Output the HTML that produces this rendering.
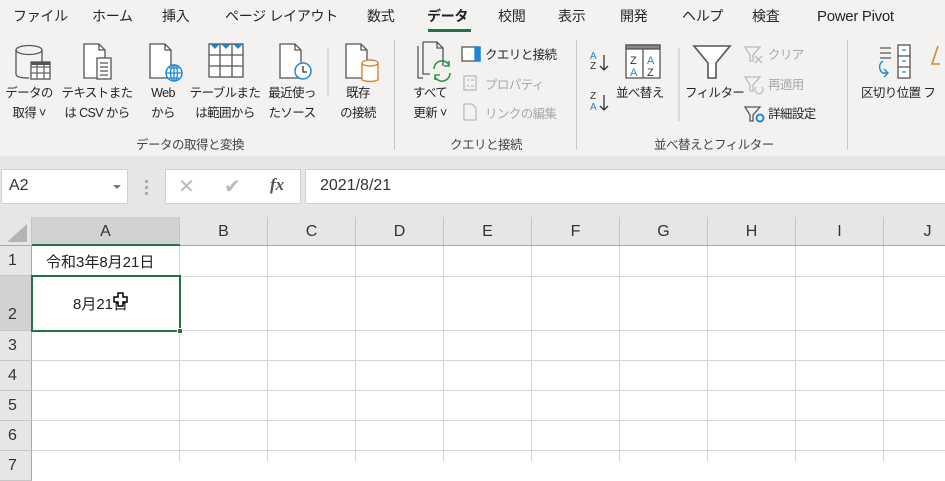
<!DOCTYPE html>
<html><head><meta charset="utf-8">
<style>
*{margin:0;padding:0;box-sizing:border-box}
body{width:945px;height:461px;overflow:hidden;background:#fff;font-family:"Liberation Sans","Noto Sans CJK JP",sans-serif;color:#262626;position:relative}
.a{position:absolute;white-space:nowrap}
.tab{font-size:14px;top:6px;line-height:20px;color:#262626;letter-spacing:-0.3px}
.lb{font-size:12.5px;color:#262626;text-align:center;line-height:20px;letter-spacing:-0.6px}
.c{width:90px;margin-left:-45px;top:83px}
.gl{font-size:12.5px;color:#444;top:136px;line-height:18px;letter-spacing:-0.5px}
.dis{color:#a8a8a8}
.sep{position:absolute;width:1px;background:#c8c8c8}
.vl{position:absolute;width:1px;background:#d4d4d4;top:246px;height:215px}
.hl{position:absolute;height:1px;background:#d4d4d4;left:32px;width:913px}
.ch{position:absolute;top:217px;height:29px;font-size:16px;color:#333;text-align:center;line-height:29px;border-right:1px solid #c6c6c6}
.rh{position:absolute;left:0;width:32px;font-size:16px;color:#333;padding-left:8px;background:#e6e6e6;border-bottom:1px solid #c6c6c6;border-right:1px solid #aaa}
</style></head><body>
<div class="a" style="left:0;top:0;width:945px;height:156px;background:#f3f2f1"></div>
<div class="a" style="left:0;top:156px;width:945px;height:61px;background:#e6e6e6"></div>

<span class="a tab" style="left:13px">ファイル</span>
<span class="a tab" style="left:92px">ホーム</span>
<span class="a tab" style="left:162px">挿入</span>
<span class="a tab" style="left:225px">ページ レイアウト</span>
<span class="a tab" style="left:367px">数式</span>
<span class="a tab" style="left:427px;font-weight:bold;color:#222">データ</span>
<div class="a" style="left:428px;top:29px;width:43px;height:3px;background:#217346"></div>
<span class="a tab" style="left:498px">校閲</span>
<span class="a tab" style="left:558px">表示</span>
<span class="a tab" style="left:620px">開発</span>
<span class="a tab" style="left:682px">ヘルプ</span>
<span class="a tab" style="left:752px">検査</span>
<span class="a tab" style="left:817px;font-size:15px;top:7px">Power Pivot</span>

<svg class="a" style="left:0;top:36px" width="945" height="90" fill="none" stroke="#555" stroke-width="1.3">
 <ellipse cx="29" cy="14" rx="13" ry="4.5"/>
 <path d="M16 14 V38 Q16 42 29 42"/>
 <path d="M42 14 V26"/>
 <rect x="31" y="26" width="19" height="17" fill="#fff"/>
 <path d="M31 31H50M31 37H50M37 26V43M44 26V43" stroke="#666"/>
 <rect x="31" y="26" width="19" height="3" fill="#555" stroke="none"/>
 <path d="M84 8H99L105 14V42H84Z" fill="#fff"/>
 <path d="M99 8V14H105"/>
 <rect x="97" y="22" width="14" height="21" fill="#fff"/>
 <path d="M100 27H108M100 31H108M100 35H108M100 39H108"/>
 <path d="M150 8H165L171 14V42H150Z" fill="#fff"/>
 <path d="M165 8V14H171"/>
 <circle cx="174" cy="37" r="8" fill="#fff" stroke="#1e88d6" stroke-width="1.5"/>
 <path d="M166 37H182M174 29V45M169 32H179M169 42H179" stroke="#1e88d6"/>
 <ellipse cx="174" cy="37" rx="3.5" ry="8" stroke="#1e88d6"/>
 <rect x="209" y="8" width="34" height="33" fill="#fff"/>
 <path d="M209 19H243M209 30H243M220 8V41M232 8V41"/>
 <path d="M212 9l3 3 3-3zM223 9l3 3 3-3zM235 9l3 3 3-3z" fill="#1e88d6" stroke="#1e88d6"/>
 <path d="M280 8H295L301 14V42H280Z" fill="#fff"/>
 <path d="M295 8V14H301"/>
 <circle cx="303" cy="35" r="8" fill="#fff" stroke="#1e88d6" stroke-width="1.5"/>
 <path d="M303 30V36H307" stroke="#333"/>
 <line x1="328" y1="12" x2="328" y2="60" stroke="#ccc"/>
 <path d="M346 8H361L367 14V42H346Z" fill="#fff"/>
 <path d="M361 8V14H367"/>
 <path d="M362 27V44Q370 47 378 44V27" fill="#fff" stroke="#d08a30" stroke-width="1.4"/>
 <ellipse cx="370" cy="27" rx="8" ry="3" fill="#fff" stroke="#d08a30" stroke-width="1.4"/>
 <path d="M418 10V42H423"/>
 <path d="M423 6H437L443 12V30"/><path d="M437 6V12H443"/>
 <path d="M423 6V38H430"/>
 <path d="M434 33a8 8 0 0 1 15-4M450 37a8 8 0 0 1-15 4" stroke="#2a9a48" stroke-width="1.6"/>
 <path d="M449 25v5h-5M435 44v-5h5" stroke="#2a9a48" stroke-width="1.6"/>
 <rect x="462" y="11" width="18" height="14" fill="#fff"/>
 <rect x="475" y="11" width="5" height="14" fill="#1e88d6" stroke="#1e88d6"/>
 <rect x="464" y="40" width="12" height="14" stroke="#bbb"/>
 <path d="M467 44h2M467 50h2M471 44h3M471 50h3" stroke="#bbb"/>
 <path d="M464 68V84h12V72l-4-4z" stroke="#bbb"/>
 <text x="590" y="23" font-size="10" fill="#1e88d6" stroke="none" font-family="Liberation Sans">A</text>
 <text x="590" y="33" font-size="10" fill="#333" stroke="none" font-family="Liberation Sans">Z</text>
 <path d="M604 19V34M600 30l4 4 4-4" stroke="#333"/>
 <text x="590" y="63" font-size="10" fill="#333" stroke="none" font-family="Liberation Sans">Z</text>
 <text x="590" y="74" font-size="10" fill="#1e88d6" stroke="none" font-family="Liberation Sans">A</text>
 <path d="M604 59V74M600 70l4 4 4-4" stroke="#333"/>
 <rect x="626" y="9" width="34" height="33" fill="#fff"/>
 <rect x="626" y="9" width="34" height="4" fill="#888" stroke="#555"/>
 <line x1="643" y1="13" x2="643" y2="42"/>
 <text x="630" y="28" font-size="11" fill="#333" stroke="none" font-family="Liberation Sans">Z</text>
 <text x="630" y="40" font-size="11" fill="#1e88d6" stroke="none" font-family="Liberation Sans">A</text>
 <text x="647" y="28" font-size="11" fill="#1e88d6" stroke="none" font-family="Liberation Sans">A</text>
 <text x="647" y="40" font-size="11" fill="#333" stroke="none" font-family="Liberation Sans">Z</text>
 <line x1="679" y1="12" x2="679" y2="85" stroke="#ccc"/>
 <path d="M694 10H730L716 27V42H708V27Z" fill="#fff" stroke-width="1.6"/>
 <path d="M745 11H760L753 19V25H750V19Z" stroke="#bbb"/>
 <path d="M755 20l7 7M762 20l-7 7" stroke="#bbb"/>
 <path d="M745 41H760L753 49V55H750V49Z" stroke="#bbb"/>
 <path d="M756 51a4 4 0 1 0 6 0" stroke="#bbb"/>
 <path d="M745 71H760L753 79V85H750V79Z"/>
 <circle cx="760" cy="82" r="3.5" stroke="#1e88d6" stroke-width="2"/>
 <path d="M880 12H891M880 17H891M880 22H891"/>
 <path d="M883 25a7 7 0 0 0 0 12h5M884 33l4 4-4 4" stroke="#1e88d6" stroke-width="1.4"/>
 <rect x="898" y="9" width="12" height="33" fill="#fff"/>
 <path d="M898 20H910M898 31H910"/>
 <path d="M902 14H906M902 25H906M902 36H906" stroke="#1e88d6"/>
 <path d="M938 10l-6 18h8" stroke="#d08a30" stroke-width="1.6"/>
</svg>

<div class="a lb c" style="left:29px">データの<br>取得 ˅</div>
<div class="a lb c" style="left:97px">テキストまた<br>は CSV から</div>
<div class="a lb c" style="left:163px">Web<br>から</div>
<div class="a lb c" style="left:225px">テーブルまた<br>は範囲から</div>
<div class="a lb c" style="left:292px">最近使っ<br>たソース</div>
<div class="a lb c" style="left:358px">既存<br>の接続</div>
<div class="a lb c" style="left:430px">すべて<br>更新 ˅</div>
<span class="a lb" style="left:485px;top:45px">クエリと接続</span>
<span class="a lb dis" style="left:485px;top:75px">プロパティ</span>
<span class="a lb dis" style="left:485px;top:104px">リンクの編集</span>
<span class="a lb" style="left:616px;top:83px">並べ替え</span>
<span class="a lb" style="left:685px;top:83px">フィルター</span>
<span class="a lb dis" style="left:768px;top:45px">クリア</span>
<span class="a lb dis" style="left:768px;top:75px">再適用</span>
<span class="a lb" style="left:768px;top:104px">詳細設定</span>
<span class="a lb" style="left:861px;top:83px">区切り位置 フ</span>
<span class="a gl" style="left:136px">データの取得と変換</span>
<span class="a gl" style="left:450px">クエリと接続</span>
<span class="a gl" style="left:654px">並べ替えとフィルター</span>
<div class="sep" style="left:394px;top:40px;height:110px"></div>
<div class="sep" style="left:576px;top:40px;height:110px"></div>
<div class="sep" style="left:847px;top:40px;height:110px"></div>

<div class="a" style="left:1px;top:169px;width:127px;height:35px;background:#fff;border:1px solid #d0d0d0"></div>
<span class="a" style="left:9px;top:177px;font-size:16px;color:#333">A2</span>
<div class="a" style="left:113px;top:185px;border-left:4px solid transparent;border-right:4px solid transparent;border-top:4px solid #777"></div>
<div class="a" style="left:145px;top:180px;width:3px;height:3px;background:#aaa;box-shadow:0 6px #aaa,0 12px #aaa"></div>
<div class="a" style="left:165px;top:169px;width:136px;height:35px;background:#fff;border:1px solid #d0d0d0"></div>
<span class="a" style="left:178px;top:174px;font-size:20px;color:#bbb">✕</span>
<span class="a" style="left:224px;top:174px;font-size:20px;color:#bbb">✔</span>
<span class="a" style="left:270px;top:175px;font-size:17px;color:#555;font-family:'Liberation Serif',serif;font-style:italic;font-weight:bold">fx</span>
<div class="a" style="left:305px;top:169px;width:645px;height:35px;background:#fff;border:1px solid #d0d0d0"></div>
<span class="a" style="left:320px;top:177px;font-size:16px;color:#333">2021/8/21</span>

<div class="a" style="left:0;top:217px;width:32px;height:29px;background:#e6e6e6;border-right:1px solid #c6c6c6"></div>
<div class="a" style="left:7px;top:224px;width:0;height:0;border-left:20px solid transparent;border-bottom:18px solid #b4b4b4"></div>
<div class="ch" style="left:32px;width:148px;background:#d2d2d2">A</div>
<div class="ch" style="left:180px;width:88px;background:#e6e6e6">B</div>
<div class="ch" style="left:268px;width:88px;background:#e6e6e6">C</div>
<div class="ch" style="left:356px;width:88px;background:#e6e6e6">D</div>
<div class="ch" style="left:444px;width:88px;background:#e6e6e6">E</div>
<div class="ch" style="left:532px;width:88px;background:#e6e6e6">F</div>
<div class="ch" style="left:620px;width:88px;background:#e6e6e6">G</div>
<div class="ch" style="left:708px;width:88px;background:#e6e6e6">H</div>
<div class="ch" style="left:796px;width:88px;background:#e6e6e6">I</div>
<div class="ch" style="left:884px;width:88px;background:#e6e6e6">J</div>
<div class="a" style="left:0;top:245px;width:945px;height:1px;background:#aaa"></div>
<div class="a" style="left:32px;top:244px;width:148px;height:2px;background:#217346"></div>

<div class="rh" style="top:246px;height:30px;line-height:30px">1</div>
<div class="rh" style="top:276px;height:55px;line-height:78px;background:#d2d2d2">2</div>
<div class="rh" style="top:331px;height:30px;line-height:30px">3</div>
<div class="rh" style="top:361px;height:30px;line-height:30px">4</div>
<div class="rh" style="top:391px;height:30px;line-height:30px">5</div>
<div class="rh" style="top:421px;height:30px;line-height:30px">6</div>
<div class="rh" style="top:451px;height:30px;line-height:30px">7</div>

<div class="vl" style="left:179px"></div><div class="vl" style="left:267px"></div>
<div class="vl" style="left:355px"></div><div class="vl" style="left:443px"></div>
<div class="vl" style="left:531px"></div><div class="vl" style="left:619px"></div>
<div class="vl" style="left:707px"></div><div class="vl" style="left:795px"></div>
<div class="vl" style="left:883px"></div>
<div class="hl" style="top:276px"></div><div class="hl" style="top:330px"></div>
<div class="hl" style="top:360px"></div><div class="hl" style="top:390px"></div>
<div class="hl" style="top:420px"></div><div class="hl" style="top:450px"></div>

<span class="a" style="left:46px;top:251px;font-size:15px;color:#222">令和3年8月21日</span>
<div class="a" style="left:31px;top:275px;width:150px;height:57px;border:2px solid #217346"></div>
<div class="a" style="left:177px;top:328px;width:6px;height:6px;background:#217346;border:1px solid #fff"></div>
<span class="a" style="left:73px;top:293px;font-size:15px;color:#222">8月21日</span>
<svg class="a" style="left:113px;top:292px" width="16" height="16"><path d="M5 1H10V5H14V10H10V14H5V10H1V5H5Z" fill="#fff" stroke="#000" stroke-width="1.5"/></svg>
</body></html>
